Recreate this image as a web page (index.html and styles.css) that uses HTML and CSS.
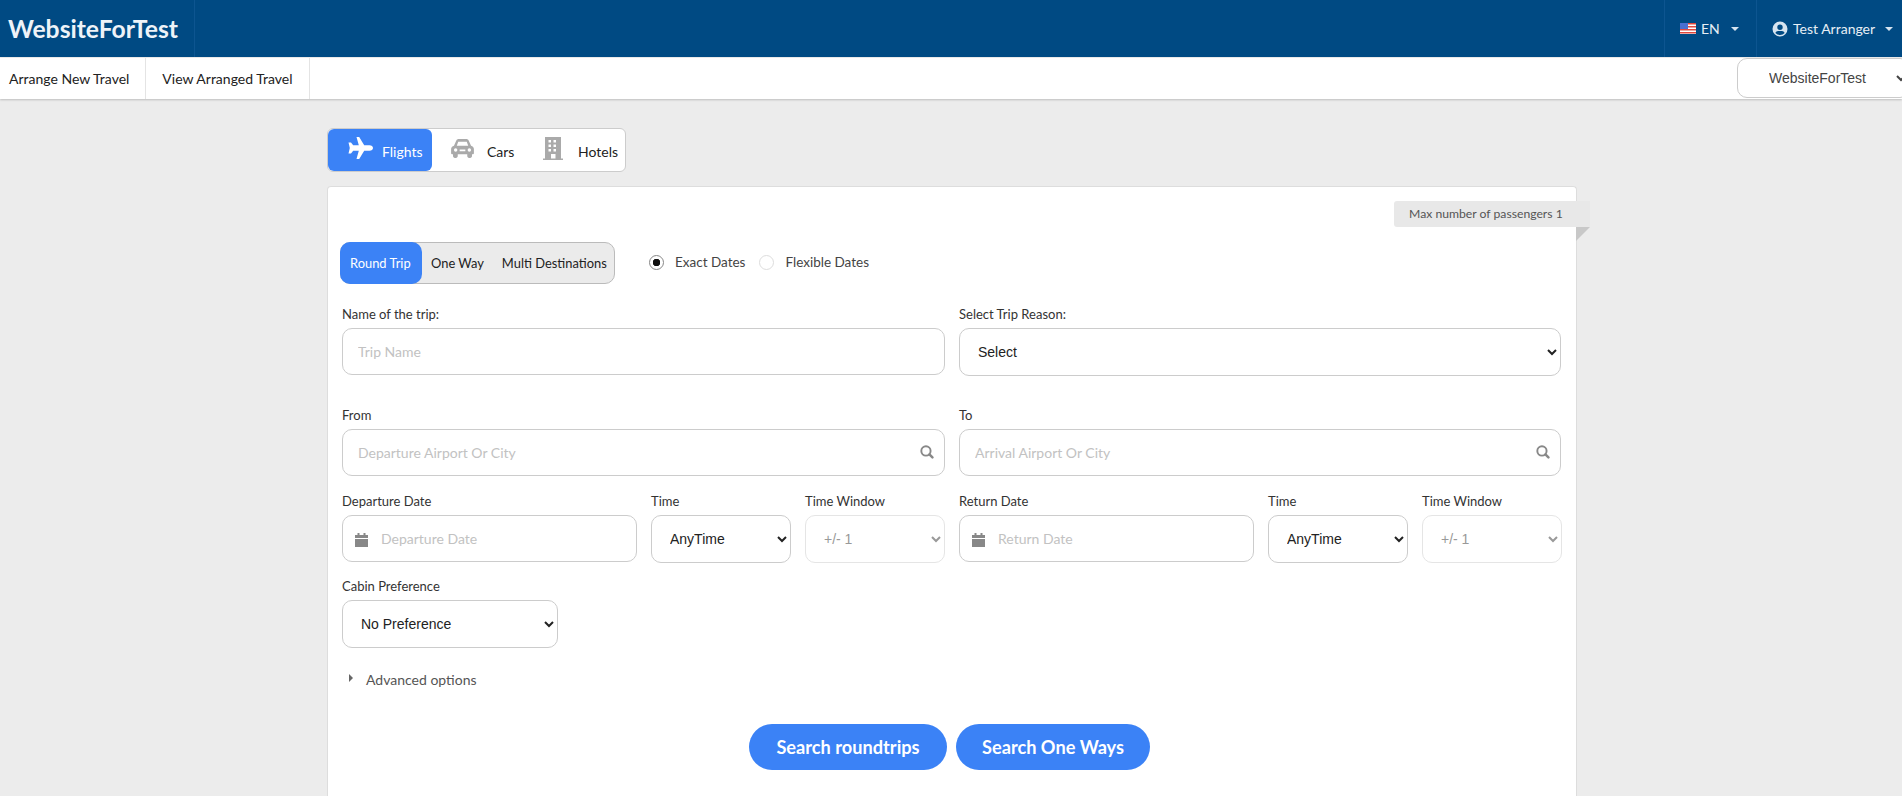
FILE: index.html
```html
<!DOCTYPE html>
<html lang="en">
<head>
<meta charset="utf-8">
<title>WebsiteForTest</title>
<link rel="stylesheet" href="styles.css">
</head>
<body>
<header class="topbar">
  <a class="brand">WebsiteForTest</a>
  <div class="top-right">
    <div class="top-item lang">
      <svg class="flag" viewBox="0 0 16 11"><rect width="16" height="11" fill="#fff"/><path d="M0 0h16v1.500H0zM0 3h16v1.500H0zM0 6h16v1.500H0zM0 9h16v1.500H0z" fill="#e0483e"/><rect width="8" height="6" fill="#4a6fd0"/></svg>
      <span>EN</span>
      <i class="caret caret-lang"></i>
    </div>
    <div class="top-item user">
      <svg class="user-icon" viewBox="0 0 16 16"><path fill="#d6e4f0" fill-rule="evenodd" d="M8 .5a7.500 7.500 0 1 0 0 15 7.500 7.500 0 0 0 0-15zm0 3a2.700 2.700 0 1 1 0 5.400 2.700 2.700 0 0 1 0-5.400zM8 14a6 6 0 0 1-4.600-2.100C4 10.700 5 10 6 10h4c1 0 2 .7 2.600 1.900A6 6 0 0 1 8 14z"/></svg>
      <span>Test Arranger</span>
      <i class="caret caret-user"></i>
    </div>
  </div>
</header>
<nav class="subnav">
  <a class="subnav-link first">Arrange New Travel</a>
  <a class="subnav-link second">View Arranged Travel</a>
  <select class="site-select"><option>WebsiteForTest</option></select>
</nav>
<main class="page">
  <div class="tabs">
    <div class="tab active tab-flights">
      <svg class="ico-plane" viewBox="0 0 26 22"><path fill="#fff" d="M9.500 0h2.700l5 8.200h5.300c2 0 3.500 1.300 3.500 2.800s-1.500 2.800-3.500 2.800h-5.300l-5 8.200H9.500l2.300-8.200H6.200L4 16.500H1.500L2.800 11 1.500 5.500H4l2.200 2.700h5.600z"/></svg>
      <span>Flights</span>
    </div>
    <div class="tab tab-cars">
      <svg class="ico-car" viewBox="0 0 24 20"><path fill="#aaa" fill-rule="evenodd" d="M5.500 1.500C6 .6 7 0 8 0h8c1 0 2 .6 2.500 1.500L21 7c1.800.5 3 2 3 3.500V15c0 .6-.4 1-1 1h-1v2c0 1-.8 2-2 2h-1c-1.200 0-2-1-2-2v-2H7v2c0 1-.8 2-2 2H4c-1.200 0-2-1-2-2v-2H1c-.6 0-1-.4-1-1v-4.500C0 9 1.200 7.500 3 7zM7.500 3 6 7h12l-1.500-4zM4.800 9.800a1.800 1.800 0 1 0 0 3.600 1.800 1.800 0 0 0 0-3.600zm14.400 0a1.800 1.800 0 1 0 0 3.600 1.800 1.800 0 0 0 0-3.600zM9 11v2h6v-2z"/></svg>
      <span>Cars</span>
    </div>
    <div class="tab tab-hotels">
      <svg class="ico-hotel" viewBox="0 0 20 23"><path fill="#aaa" fill-rule="evenodd" d="M2 0h16v21.500h2V23H0v-1.500h2zm3.500 3v2.500H8V3zm5 0v2.500H13V3zM5.500 7.500V10H8V7.500zm5 0V10H13V7.500zM5.500 12v2.500H8V12zm5 0v2.500H13V12zM8 17v4.500h4.500V17z"/></svg>
      <span>Hotels</span>
    </div>
  </div>

  <section class="card">
    <div class="ribbon">Max number of passengers 1</div>
    <div class="trip-row">
      <div class="trip-toggle">
        <span class="trip-opt active">Round Trip</span>
        <span class="trip-opt">One Way</span>
        <span class="trip-opt">Multi Destinations</span>
      </div>
      <div class="radio-group">
        <span class="radio checked"></span><span class="radio-label wide">Exact Dates</span>
        <span class="radio"></span><span class="radio-label">Flexible Dates</span>
      </div>
    </div>

    <div class="form-grid row-name">
      <div class="field">
        <label class="label">Name of the trip:</label>
        <input class="control" placeholder="Trip Name">
      </div>
      <div class="field">
        <label class="label">Select Trip Reason:</label>
        <select class="control select"><option>Select</option></select>
      </div>
    </div>

    <div class="form-grid row-route">
      <div class="field">
        <label class="label">From</label>
        <div class="input-wrap">
          <input class="control" placeholder="Departure Airport Or City">
          <svg class="ico-search" viewBox="0 0 16 16"><path fill="none" stroke="#888" stroke-width="2.200" d="M6.800 1.500a5.300 5.300 0 1 0 0 10.600 5.300 5.300 0 0 0 0-10.600z"/><path stroke="#888" stroke-width="2.800" stroke-linecap="round" d="M10.800 10.800l3.400 3.400"/></svg>
        </div>
      </div>
      <div class="field">
        <label class="label">To</label>
        <div class="input-wrap">
          <input class="control" placeholder="Arrival Airport Or City">
          <svg class="ico-search" viewBox="0 0 16 16"><path fill="none" stroke="#888" stroke-width="2.200" d="M6.800 1.500a5.300 5.300 0 1 0 0 10.600 5.300 5.300 0 0 0 0-10.600z"/><path stroke="#888" stroke-width="2.800" stroke-linecap="round" d="M10.800 10.800l3.400 3.400"/></svg>
        </div>
      </div>
    </div>

    <div class="form-grid row-dates">
      <div class="date-group">
        <div class="field">
          <label class="label">Departure Date</label>
          <div class="input-wrap">
            <svg class="ico-cal" viewBox="0 0 13 14"><path fill="#888" d="M2.500 0h2v2h4V0h2v2H13v3H0V2h2.500zM0 6h13v8H0z"/></svg>
            <input class="control with-icon" placeholder="Departure Date">
          </div>
        </div>
        <div class="field">
          <label class="label">Time</label>
          <select class="control select small"><option>AnyTime</option></select>
        </div>
        <div class="field">
          <label class="label">Time Window</label>
          <select class="control select small" disabled><option>+/- 1</option></select>
        </div>
      </div>
      <div class="date-group">
        <div class="field">
          <label class="label">Return Date</label>
          <div class="input-wrap">
            <svg class="ico-cal" viewBox="0 0 13 14"><path fill="#888" d="M2.500 0h2v2h4V0h2v2H13v3H0V2h2.500zM0 6h13v8H0z"/></svg>
            <input class="control with-icon" placeholder="Return Date">
          </div>
        </div>
        <div class="field">
          <label class="label">Time</label>
          <select class="control select small"><option>AnyTime</option></select>
        </div>
        <div class="field">
          <label class="label">Time Window</label>
          <select class="control select small" disabled><option>+/- 1</option></select>
        </div>
      </div>
    </div>

    <div class="field cabin">
      <label class="label">Cabin Preference</label>
      <select class="control select small"><option>No Preference</option></select>
    </div>

    <div class="advanced"><i class="tri"></i><span>Advanced options</span></div>

    <div class="actions">
      <button class="btn btn-round">Search roundtrips</button>
      <button class="btn btn-one">Search One Ways</button>
    </div>
  </section>
</main>
</body>
</html>
```
FILE: styles.css
```css
* { box-sizing: border-box; }
html, body { margin: 0; height: 100%; overflow: hidden; }
body { background: #ececec; font-family: Lato, "Liberation Sans", sans-serif; font-size: 14px; color: #333; }

.topbar { height: 57px; background: #004a83; color: #e6eef5; display: flex; justify-content: space-between; }
.brand { width: 195px; padding-left: 8px; border-right: 1px solid #0d5590; font-size: 24.700px; font-weight: 700; line-height: 57px; color: #eef3f8; }
.top-right { display: flex; }
.top-item { display: flex; align-items: center; height: 57px; border-left: 1px solid #0d5590; font-size: 14px; }
.lang { width: 92px; padding-left: 15px; }
.user { width: 146px; padding-left: 15px; }
.flag { width: 16px; height: 11px; margin-right: 5px; }
.user-icon { width: 16px; height: 16px; margin-right: 5px; }
.caret { width: 0; height: 0; border-left: 4px solid transparent; border-right: 4px solid transparent; border-top: 4px solid #d6e4f0; }
.caret-lang { margin-left: 11px; }
.caret-user { margin-left: 10px; }

.subnav { height: 41px; margin-top: 1px; background: #fff; display: flex; align-items: stretch; box-shadow: 0 1px 2px rgba(0,0,0,.2); position: relative; }
.subnav-link { display: flex; align-items: center; border-right: 1px solid #e4e4e4; color: #222; font-size: 14px; }
.subnav-link.first { padding: 0 16px 0 9px; }
.subnav-link.second { padding: 0 17px 0 16px; }
.site-select { margin-left: auto; margin-right: -8px; width: 173px; height: 40px; padding-left: 27px; border: 1px solid #ccc; border-radius: 10px; background: #fff; color: #444; font-family: "Liberation Sans", sans-serif; font-size: 14px; }

.page { width: 1250px; margin-left: 327px; padding-top: 29px; }
.tabs { display: flex; width: 299px; height: 44px; background: #fff; border: 1px solid #ccc; border-radius: 6px; }
.tab { display: flex; align-items: center; color: #222; font-size: 14px; }
.tab span { position: relative; top: 1px; }
.tab.active { background: #3b82f6; color: #fff; border-radius: 6px; }
.tab-flights { width: 104px; padding-left: 19px; }
.ico-plane { width: 26px; height: 22px; margin-right: 9px; position: relative; top: -2px; }
.tab-cars { width: 111px; padding-left: 19px; }
.ico-car { width: 23px; height: 19px; margin-right: 13px; position: relative; top: -2px; }
.ico-hotel { width: 20px; height: 23px; margin-right: 15px; position: relative; top: -2px; }

.card { position: relative; margin-top: 14px; height: 610px; background: #fff; border: 1px solid #ddd; border-bottom: 0; border-radius: 4px 4px 0 0; padding: 55px 14px 0 12px; }
.ribbon { position: absolute; top: 14px; right: -14px; width: 196px; height: 26px; padding-left: 15px; background: #e8e8e8; border-radius: 3px 0 0 3px; color: #555; font-size: 12.200px; line-height: 26px; }
.ribbon::after { content: ""; position: absolute; right: 0; top: 26px; border-top: 14px solid #c8c8c8; border-right: 14px solid transparent; }

.trip-row { display: flex; align-items: center; }
.trip-toggle { display: flex; width: 275px; height: 42px; background: #ebebeb; border: 1px solid #bbb; border-radius: 10px; }
.trip-opt { display: flex; align-items: center; color: #222; font-size: 12.900px; white-space: nowrap; padding-left: 8px; }
.trip-opt:nth-child(2) { padding-left: 9px; }
.trip-opt:nth-child(3) { padding-left: 18px; }
.trip-opt.active { width: 82px; margin: -1px 0 -1px -1px; padding-left: 10px; background: #3b82f6; color: #fff; border-radius: 10px; }

.radio-group { display: flex; align-items: center; margin-left: 34px; position: relative; top: -1px; }
.radio { width: 15px; height: 15px; border: 1px solid #ddd; border-radius: 50%; background: #fff; }
.radio.checked { border-color: #888; background: radial-gradient(circle, #111 0 3.500px, #fff 4px); }
.radio-label { margin-left: 11px; margin-right: 12px; color: #444; font-size: 13.500px; }
.radio-label.wide { margin-right: 14px; }

.form-grid { display: grid; grid-template-columns: 603px 602px; column-gap: 14px; margin-left: 2px; }
.row-name { margin-top: 20px; }
.row-route { margin-top: 29px; }
.row-dates { margin-top: 15px; }
.field { display: flex; flex-direction: column; min-width: 0; }
.label { height: 24px; line-height: 20px; font-size: 13px; color: #333; }
.control { width: 100%; height: 47px; padding: 0 15px; border: 1px solid #ccc; border-radius: 10px; background: #fff; font-family: Lato, sans-serif; font-size: 14px; color: #222; outline: none; }
.control::placeholder { color: #c2c2c2; opacity: 1; }
.select { height: 48px; font-family: "Liberation Sans", sans-serif; color: #222; padding-left: 14px; }
.select:disabled { border-color: #e5e5e5; color: #999; opacity: 1; background: #fff; }
.input-wrap { position: relative; }
.with-icon { padding-left: 38px; }
.ico-search { position: absolute; right: 11px; top: 16px; width: 14px; height: 14px; }
.ico-cal { position: absolute; left: 13px; top: 18px; width: 13px; height: 14px; }
.date-group { display: grid; grid-template-columns: 295px 140px 140px; column-gap: 14px; }
.cabin { width: 216px; margin: 13px 0 0 2px; }
.advanced { display: flex; align-items: center; margin: 21px 0 0 9px; color: #555; font-size: 14px; height: 20px; }
.tri { width: 0; height: 0; border-top: 4px solid transparent; border-bottom: 4px solid transparent; border-left: 4px solid #666; margin-right: 13px; position: relative; top: -1px; }
.actions { display: flex; gap: 9px; margin: 35px 0 0 409px; }
.btn { height: 46px; border: 0; border-radius: 23px; background: #3b82f6; color: #fff; font-family: Lato, sans-serif; font-size: 18.200px; font-weight: 700; padding: 0; }
.btn-round { width: 198px; }
.btn-one { width: 194px; }
```
